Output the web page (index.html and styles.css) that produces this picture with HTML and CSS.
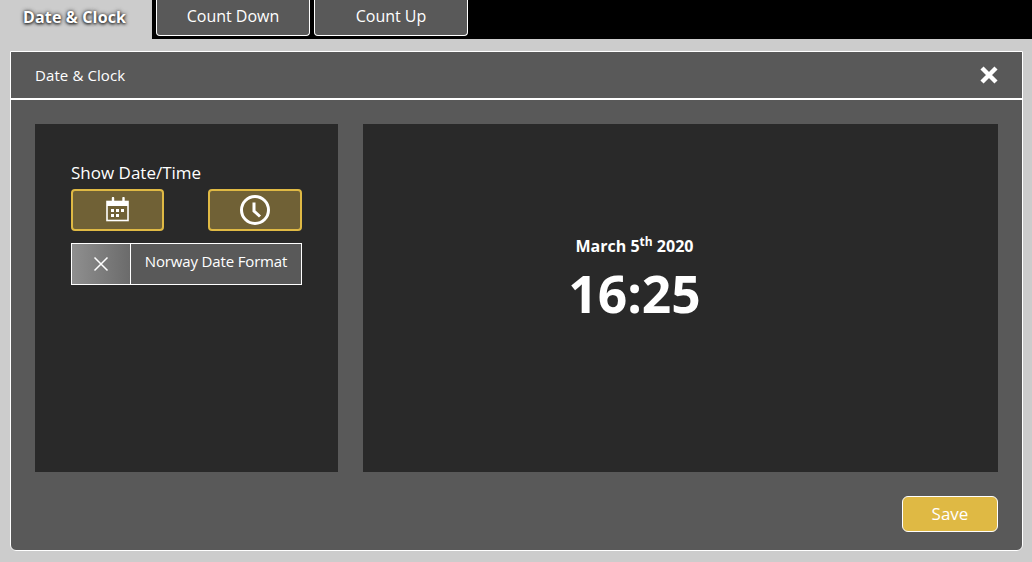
FILE: index.html
```html
<!DOCTYPE html>
<html lang="en">

<head>
    <meta charset="UTF-8">
    <meta name="viewport" content="width=device-width, initial-scale=1.0">
    <title>Date &amp; Clock</title>
    <link rel="stylesheet" href="styles.css">
</head>

<body>
    <div class="tabs">
        <div class="tab-active">Date &amp; Clock</div>
        <div class="tab">Count Down</div>
        <div class="tab">Count Up</div>
    </div>

    <div class="panel">
        <div class="panel-header">
            <span>Date &amp; Clock</span>
            <svg class="close-icon" width="20" height="20" viewBox="0 0 20 20">
                <path d="M3 3L17 17M17 3L3 17" stroke="#fff" stroke-width="4.4" fill="none" />
            </svg>
        </div>

        <div class="panel-body">
            <div class="settings">
                <div class="settings-label">Show Date/Time</div>
                <div class="icon-buttons">
                    <div class="icon-button">
                        <svg width="26" height="26" viewBox="0 0 26 26" fill="none" stroke="#fff">
                            <rect x="3" y="4.5" width="21" height="19" stroke-width="1.6" />
                            <path d="M3 4H24V9H3Z" fill="#fff" stroke="none" />
                            <path d="M9 1V5M19.5 1V5" stroke-width="2.4" stroke-linecap="round" />
                            <path d="M7 12h3v3H7ZM12 12h3v3h-3ZM17 12h3v3h-3ZM7 17h3v3H7ZM12 17h3v3h-3Z" fill="#fff" stroke="none" />
                        </svg>
                    </div>
                    <div class="icon-button">
                        <svg width="32" height="32" viewBox="0 0 32 32" fill="none" stroke="#fff">
                            <circle cx="16" cy="16" r="13.5" stroke-width="3" />
                            <path d="M15 8.5V17L21 22.5" stroke-width="3" />
                        </svg>
                    </div>
                </div>
                <div class="toggle">
                    <div class="toggle-box">
                        <svg width="16" height="16" viewBox="0 0 16 16">
                            <path d="M1.5 1.5L14.5 14.5M14.5 1.5L1.5 14.5" stroke="#fff" stroke-width="1.5" fill="none" />
                        </svg>
                    </div>
                    <div class="toggle-label">Norway Date Format</div>
                </div>
            </div>

            <div class="preview">
                <div class="preview-date">March 5<sup>th</sup> 2020</div>
                <div class="preview-time">16:25</div>
            </div>
        </div>

        <div class="panel-footer">
            <button class="save-button">Save</button>
        </div>
    </div>
</body>

</html>
```

FILE: styles.css
```css
* {
    box-sizing: border-box;
}

body {
    margin: 0;
    height: 562px;
    overflow: hidden;
    background-color: #cccccc;
    color: #fff;
    font-family: 'Open Sans', 'Noto Sans', sans-serif;
}

.tabs {
    display: flex;
    height: 39px;
    background-color: #000;
}

.tab-active {
    width: 152px;
    padding: 6px 0 0 23px;
    background-color: #cccccc;
    font-size: 16px;
    font-weight: 700;
    letter-spacing: 0.15px;
    text-shadow: 0 1px 3px #111, 0 0 4px #333;
}

.tab {
    width: 154px;
    height: 36px;
    margin-left: 4px;
    padding-top: 5px;
    background-color: #595959;
    border: 1px solid #fff;
    border-top: none;
    border-radius: 0 0 4px 4px;
    text-align: center;
    font-size: 16px;
}

.panel {
    width: 1013px;
    height: 500px;
    margin: 12px 0 0 10px;
    background-color: #595959;
    border: 1px solid #fff;
    border-radius: 0 0 6px 6px;
}

.panel-header {
    display: flex;
    justify-content: space-between;
    align-items: center;
    height: 48px;
    padding: 0 24px;
    border-bottom: 2px solid #fff;
    font-size: 15px;
    letter-spacing: 0.1px;
}

.close-icon {
    margin-right: -1px;
}

.panel-body {
    display: flex;
    gap: 25px;
    padding: 24px 24px 0;
}

.settings {
    width: 303px;
    height: 348px;
    padding: 37px 36px 0;
    background-color: #292929;
}

.settings-label {
    height: 28px;
    font-size: 17px;
}

.icon-buttons {
    display: flex;
    justify-content: space-between;
    width: 231px;
}

.icon-button {
    display: flex;
    align-items: center;
    justify-content: center;
    width: 93px;
    height: 42px;
    padding-right: 2px;
    background-color: #706136;
    border: 2px solid #dfb944;
    border-radius: 4px;
}

.icon-button + .icon-button {
    width: 94px;
    padding-right: 0;
}

.toggle {
    display: flex;
    width: 231px;
    height: 42px;
    margin-top: 12px;
    border: 1px solid #fff;
    background-color: #595959;
}

.toggle-box {
    display: flex;
    align-items: center;
    justify-content: center;
    width: 59px;
    border-right: 1px solid #fff;
    background: linear-gradient(to right, #8f8f8f, #6b6b6b);
}

.toggle-label {
    flex: 1;
    padding-top: 7px;
    text-align: center;
    font-size: 15px;
    letter-spacing: -0.15px;
}

.preview {
    display: flex;
    flex-direction: column;
    align-items: center;
    width: 635px;
    height: 348px;
    padding: 111px 92px 0 0;
    background-color: #292929;
}

.preview-date {
    height: 26px;
    font-size: 16px;
    font-weight: 700;
}

.preview-date sup {
    font-size: 12px;
    line-height: 0;
}

.preview-time {
    font-size: 51.5px;
    line-height: 65px;
    font-weight: 700;
}

.panel-footer {
    display: flex;
    justify-content: flex-end;
    padding: 24px 24px 0;
}

.save-button {
    width: 96px;
    height: 36px;
    padding: 0 0 2px;
    background-color: #dfb944;
    border: 1px solid #fff;
    border-radius: 6px;
    color: #fff;
    font-family: inherit;
    font-size: 17px;
}
```
